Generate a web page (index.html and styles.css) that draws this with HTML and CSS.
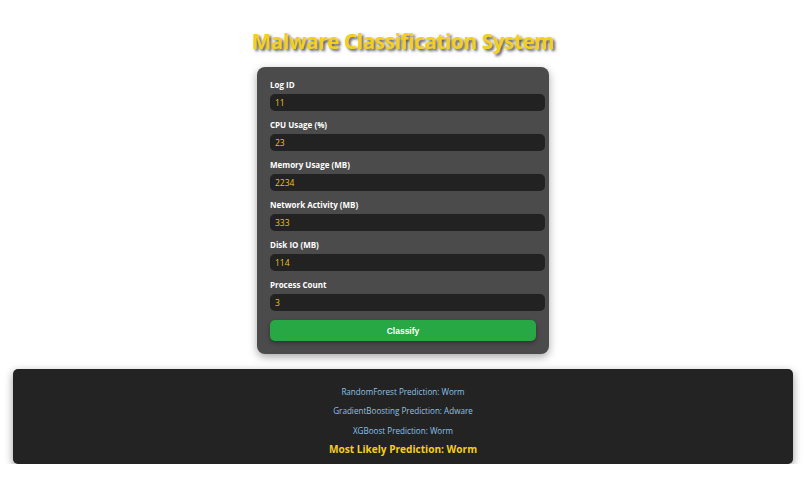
FILE: index.html
```html
<!DOCTYPE html>
<html>
<head>
<meta charset="utf-8">
<link rel="stylesheet" href="styles.css">
</head>
<body>
<h1 class="title">Malware Classification System</h1>
<form class="card">
  <div class="group"><label>Log ID</label><input type="text" value="11"></div>
  <div class="group"><label>CPU Usage (%)</label><input type="text" value="23"></div>
  <div class="group"><label>Memory Usage (MB)</label><input type="text" value="2234"></div>
  <div class="group"><label>Network Activity (MB)</label><input type="text" value="333"></div>
  <div class="group"><label>Disk IO (MB)</label><input type="text" value="114"></div>
  <div class="group"><label>Process Count</label><input type="text" value="3"></div>
  <button type="button" class="btn">Classify</button>
</form>
<div class="results">
  <p class="line l1">RandomForest Prediction: Worm</p>
  <p class="line l2">GradientBoosting Prediction: Adware</p>
  <p class="line l3">XGBoost Prediction: Worm</p>
  <p class="final">Most Likely Prediction: Worm</p>
</div>
</body>
</html>
```
FILE: styles.css
```css
html, body {
  margin: 0;
  padding: 0;
  background: #ffffff;
}
body {
  font-family: "Open Sans", "Noto Sans", sans-serif;
  padding: 0 13px;
}
.title {
  margin: 0;
  padding-top: 27px;
  height: 40px;
  line-height: 28px;
  text-align: center;
  font-size: 20.5px;
  font-weight: 700;
  color: #f4cf1c;
  text-shadow: 2px 2px 3px rgba(0,0,0,0.7);
  letter-spacing: -0.3px;
}
.card {
  width: 266px;
  margin: 0 auto;
  padding: 13px;
  background: #4b4b4b;
  border-radius: 8px;
  box-shadow: 0 3px 8px rgba(0,0,0,0.35);
}
.group {
  display: flex;
  flex-direction: column;
  margin-bottom: 9px;
}
.group label {
  display: block;
  height: 10px;
  line-height: 10px;
  font-size: 8px;
  font-weight: 700;
  color: #ffffff;
  margin-bottom: 4px;
}
.group input {
  width: 100%;
  box-sizing: content-box;
  height: 17px;
  padding: 0 4px 0 5px;
  margin: 0;
  border: none;
  outline: none;
  border-radius: 5px;
  background: #222222;
  color: #e9c12b;
  font-family: "Open Sans", "Noto Sans", sans-serif;
  font-size: 8.5px;
}
.btn {
  display: block;
  width: 100%;
  height: 21px;
  margin-top: 1px;
  border: none;
  border-radius: 5px;
  background: #28a745;
  color: #ffffff;
  font-family: "Liberation Sans", Arial, sans-serif;
  font-size: 8.5px;
  font-weight: 700;
  box-shadow: 0 2px 4px rgba(0,0,0,0.35);
}
.results {
  margin-top: 15px;
  padding: 17px 10px 8px;
  background: #232323;
  border-radius: 5px;
  box-shadow: 0 3px 8px rgba(0,0,0,0.4);
  display: flex;
  flex-direction: column;
  align-items: center;
}
.line {
  margin: 0;
  height: 12px;
  line-height: 12px;
  font-size: 8.1px;
  color: #89c2e8;
}
.l1 { margin-bottom: 7px; }
.l2 { margin-bottom: 8px; }
.l3 { margin-bottom: 5px; }
.final {
  margin: 0;
  height: 14px;
  line-height: 14px;
  font-size: 10.1px;
  font-weight: 700;
  color: #f4cf1c;
}
```
